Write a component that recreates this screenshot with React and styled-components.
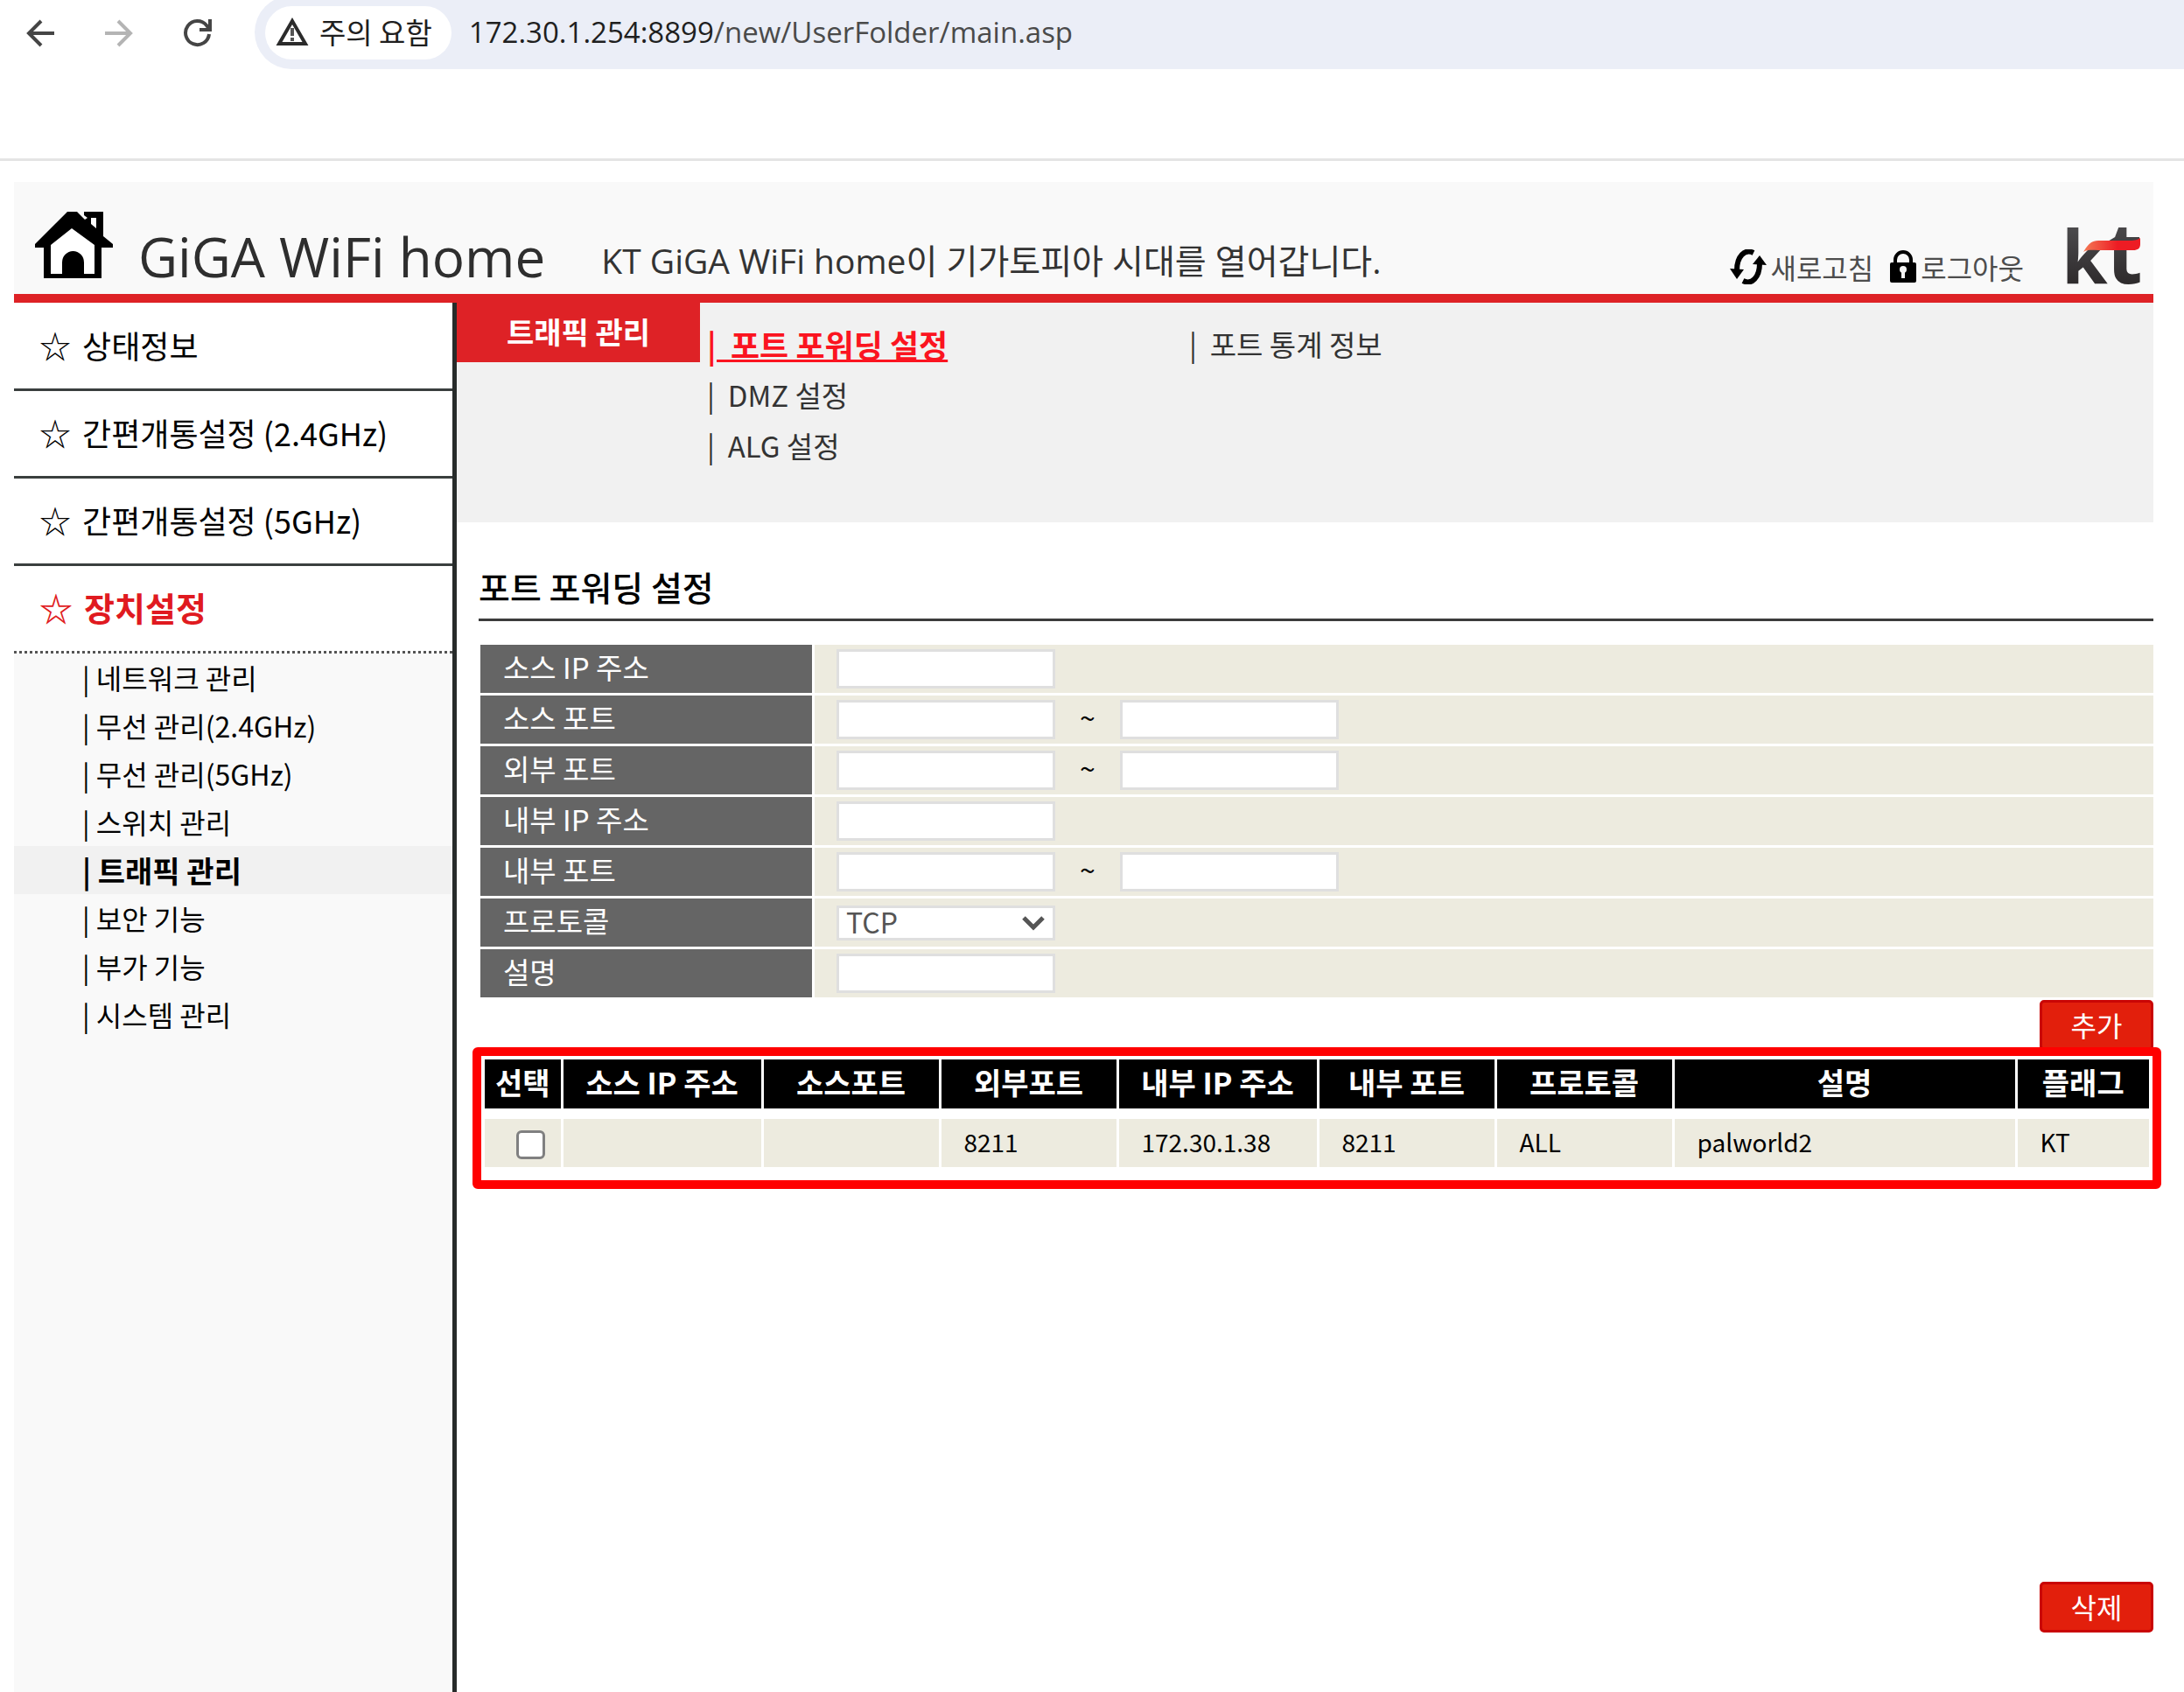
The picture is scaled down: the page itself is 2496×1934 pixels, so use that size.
import React, { useState } from 'react';
import styled, { createGlobalStyle } from 'styled-components';

const GlobalStyle = createGlobalStyle`
  * {
    box-sizing: border-box;
  }
  html, body {
    margin: 0;
    padding: 0;
    background: #ffffff;
  }
  body, button, input, select, table {
    font-family: "Noto Sans CJK KR", "Open Sans", sans-serif;
    font-size: 32px;
    color: #000000;
  }
`;

const Window = styled.div`
  display: flex;
  flex-direction: column;
  min-height: 100vh;
`;

/* browser bar */
const BrowserBar = styled.div`
  display: flex;
  align-items: flex-start;
  height: 184px;
  flex: none;
  padding-left: 24px;
  overflow: hidden;
  border-bottom: 3px solid #e4e4e4;
`;

const NavButton = styled.button`
  display: flex;
  align-items: center;
  justify-content: center;
  width: 44px;
  height: 75px;
  margin-right: 46px;
  padding: 0;
  border: none;
  background: none;
  color: ${(props) => (props.disabled ? '#b4b4b4' : '#454545')};
`;

const AddressBar = styled.div`
  display: flex;
  align-items: center;
  flex: 1;
  height: 84px;
  margin-top: -5px;
  margin-left: -3px;
  padding-left: 12px;
  border-radius: 42px 0 0 42px;
  background: #ebeef7;
`;

const SiteWarning = styled.button`
  display: flex;
  align-items: center;
  gap: 12px;
  height: 61px;
  padding: 0 22px 3px 12px;
  border: none;
  border-radius: 31px;
  background: #ffffff;
  font-size: 33px;
  line-height: 40px;
  color: #1f1f1f;
`;

const Url = styled.div`
  padding-left: 20px;
  font-family: "Open Sans", sans-serif;
  font-size: 33px;
  line-height: 44px;
  color: #4a4a4a;
`;

const Host = styled.span`
  color: #1f1f1f;
`;

/* router page */
const Page = styled.div`
  display: flex;
  flex-direction: column;
  flex: 1;
  padding: 24px 35px 0 16px;
`;

const Header = styled.header`
  display: flex;
  align-items: flex-end;
  height: 138px;
  padding: 0 14px 10px 24px;
  border-bottom: 10px solid #de2226;
  background: #f9f9f9;
`;

const Brand = styled.h1`
  display: flex;
  align-items: flex-end;
  gap: 28px;
  margin: 0;
  font-family: "Open Sans", sans-serif;
  font-size: 62px;
  font-weight: 400;
  line-height: 66px;
  color: #2e2e2e;

  & > svg {
    margin-bottom: 7px;
  }
`;

const Slogan = styled.p`
  margin: 0 auto 6px 64px;
  font-family: "Open Sans", "Noto Sans CJK KR", sans-serif;
  font-size: 39px;
  line-height: 44px;
  color: #333333;
`;

const Tools = styled.nav`
  display: flex;
  gap: 18px;
  margin: 0 48px 1px 0;
`;

const ToolLink = styled.a`
  display: flex;
  align-items: center;
  gap: 4px;
  line-height: 40px;
  color: #4d4d4d;
  text-decoration: none;
`;

const Logo = styled.svg`
  overflow: visible;
`;

const Columns = styled.div`
  display: flex;
  flex: 1;
`;

const Sidebar = styled.nav`
  width: 506px;
  flex: none;
  padding-top: 1px;
  border-right: 5px solid #272b2a;
  background: #f9f9f9;
`;

const MainItem = styled.a`
  display: flex;
  align-items: center;
  gap: 13px;
  height: 100px;
  padding: 0 0 4px 29px;
  border-bottom: ${(props) => (props.$active ? '3px dotted #555555' : '3px solid #3a3f3e')};
  background: #ffffff;
  font-size: ${(props) => (props.$active ? 38 : 36)}px;
  font-weight: ${(props) => (props.$active ? 700 : 400)};
  line-height: 48px;
  color: ${(props) => (props.$active ? '#e01a20' : '#000000')};
  text-decoration: none;
`;

const SubItem = styled.a`
  display: block;
  height: 55px;
  padding-left: 78px;
  background: ${(props) => (props.$active ? '#f1f1f1' : 'transparent')};
  font-size: ${(props) => (props.$active ? 34 : 32)}px;
  font-weight: ${(props) => (props.$active ? 700 : 400)};
  line-height: 55px;
  color: #000000;
  text-decoration: none;
`;

const Main = styled.main`
  display: flex;
  flex-direction: column;
  flex: 1;
`;

const TabPanel = styled.div`
  display: flex;
  align-items: flex-start;
  height: 251px;
  background: #f1f1f1;
`;

const TabTitle = styled.h2`
  width: 278px;
  margin: 0;
  padding-bottom: 2px;
  background: #de2226;
  font-size: 34px;
  font-weight: 700;
  line-height: 66px;
  color: #ffffff;
  text-align: center;
`;

const TabLinks = styled.div`
  display: grid;
  grid-template-columns: repeat(3, 1fr);
  flex: 1;
  padding: 18px 0 0 8px;
`;

const TabLink = styled.a`
  font-size: ${(props) => (props.$active ? 36 : 33)}px;
  font-weight: ${(props) => (props.$active ? 700 : 400)};
  line-height: 58px;
  color: ${(props) => (props.$active ? '#fb1420' : '#333333')};
  text-decoration: ${(props) => (props.$active ? 'underline' : 'none')};
  white-space: pre;
`;

const Content = styled.div`
  display: flex;
  flex-direction: column;
  flex: 1;
  padding: 50px 0 68px 25px;
`;

const SectionTitle = styled.h3`
  margin: 0 0 27px;
  padding-bottom: 13px;
  border-bottom: 3px solid #3c3c3c;
  font-size: 39px;
  font-weight: 500;
  line-height: 47px;
`;

const Form = styled.form`
  display: flex;
  flex-direction: column;
  gap: 3px;
  padding-left: 2px;
`;

const Row = styled.div`
  display: flex;
  gap: 3px;
  height: 55px;
`;

const RowLabel = styled.label`
  width: 379px;
  padding-left: 26px;
  background: #656565;
  font-size: 33px;
  line-height: 51px;
  color: #ffffff;
`;

const RowValue = styled.div`
  display: flex;
  align-items: center;
  flex: 1;
  padding: 0 0 0 25px;
  background: #edebdf;
`;

const TextBox = styled.input`
  width: 250px;
  height: 45px;
  padding: 0 10px;
  border: 3px solid #dfdfdf;
  background: #ffffff;
`;

const Tilde = styled.span`
  width: 74px;
  padding-bottom: 8px;
  line-height: 40px;
  text-align: center;
`;

const SelectWrap = styled.div`
  display: grid;
  width: 250px;
  align-items: center;

  & > * {
    grid-area: 1 / 1;
  }
  & > svg {
    justify-self: end;
    margin-right: 12px;
    pointer-events: none;
  }
`;

const SelectBox = styled.select`
  width: 100%;
  height: 40px;
  padding: 0 8px 4px;
  border: 3px solid #dfdfdf;
  border-radius: 0;
  background: #ffffff;
  line-height: 30px;
  color: #555555;
  appearance: none;
`;

const Buttons = styled.div`
  display: flex;
  justify-content: flex-end;
  margin-top: ${(props) => (props.$bottom ? 'auto' : '3px')};
`;

const RedButton = styled.button`
  width: 130px;
  height: 58px;
  padding: 0 0 3px;
  border: 3px solid #c90505;
  border-radius: 5px;
  background: #e21f0c;
  line-height: 48px;
  color: #ffffff;
`;

/* the frame lies over the bottom edge of the add button */
const RuleFrame = styled.div`
  position: relative;
  margin: -4px -9px 0 -7px;
  padding: 4px;
  border: 10px solid #ff0000;
  border-radius: 6px;
  background: #ffffff;
`;

const RuleTable = styled.table`
  width: 100%;
  table-layout: fixed;
  border-collapse: collapse;
`;

const Th = styled.th`
  width: ${(props) => (props.$width ? props.$width + 'px' : 'auto')};
  height: 56px;
  padding: 0 0 5px;
  background: #000000;
  font-size: 34px;
  font-weight: 700;
  line-height: 48px;
  color: #ffffff;

  & + & {
    border-left: 3px solid #ffffff;
  }
`;

const Td = styled.td`
  height: 55px;
  padding: 0 0 4px 26px;
  background: #edebdf;
  font-size: 28px;
  line-height: 48px;

  & + & {
    border-left: 3px solid #ffffff;
  }
`;

const CheckCell = styled(Td)`
  padding: 3px 0 0 36px;
`;

const Spacer = styled.td`
  height: ${(props) => props.$height}px;
  padding: 0;
`;

const Check = styled.input`
  display: block;
  width: 33px;
  height: 33px;
  margin: 0;
  border: 3px solid #808080;
  border-radius: 6px;
  background: #ffffff;
  appearance: none;

  &:checked {
    background: #0075ff;
  }
`;

const ArrowIcon = ({ flip }) => (
  <svg width="32" height="32" viewBox="0 0 32 32" fill="none" stroke="currentColor" strokeWidth="4">
    <path d={flip ? 'M0 16H29M15 2L29 16L15 30' : 'M32 16H3M17 2L3 16L17 30'} />
  </svg>
);

const ReloadIcon = () => (
  <svg width="34" height="34" viewBox="0 0 34 34" fill="none" stroke="currentColor" strokeWidth="4">
    <path d="M30 18A13.5 13.5 0 1 1 27 8L31 13" />
    <path d="M31 1V13H19" />
  </svg>
);

const WarningIcon = () => (
  <svg width="38" height="34" viewBox="0 0 38 34">
    <path d="M19 5L34 31H4Z" fill="none" stroke="#2b2b2b" strokeWidth="4" />
    <path d="M19 13V22M19 24V28" stroke="#555555" strokeWidth="4" />
  </svg>
);

const HouseIcon = () => (
  <svg width="90" height="77" viewBox="0 0 90 77">
    <path d="M37 0H48L57 9L60 7L56 4V0H78V28L89 37V41H76V76H10V41H0V37Z" fill="#000000" />
    <path d="M42 19L68 38V71H56V58A12.5 13 0 0 0 31 58V71H18V38Z" fill="#ffffff" />
    <path d="M64 7H70V19L64 14Z" fill="#ffffff" />
  </svg>
);

const RefreshIcon = () => (
  <svg width="42" height="40" viewBox="0 0 42 40">
    <path d="M27 4C17 -1 8 8 8 24" fill="none" stroke="#000000" strokeWidth="6" />
    <path d="M15 36C25 41 34 32 34 16" fill="none" stroke="#000000" strokeWidth="6" />
    <path d="M0 22L16 23L8 34Z" fill="#000000" />
    <path d="M42 18L26 17L34 7Z" fill="#000000" />
  </svg>
);

const LockIcon = () => (
  <svg width="32" height="38" viewBox="0 0 32 38">
    <path d="M7 16V11A9 9 0 0 1 25 11V16" fill="none" stroke="#000000" strokeWidth="4" />
    <rect x="1" y="14" width="30" height="23" rx="2" fill="#000000" />
    <circle cx="16" cy="22" r="4" fill="#f4f4f4" />
    <path d="M14 24H18V32H14Z" fill="#f4f4f4" />
  </svg>
);

const KtLogo = () => (
  <Logo width="86" height="68" viewBox="0 0 86 68" role="img" aria-label="kt">
    <defs>
      <linearGradient id="ktInk" x1="0" y1="0" x2="0" y2="1">
        <stop offset="0" stopColor="#58585a" />
        <stop offset="1" stopColor="#231f20" />
      </linearGradient>
      <linearGradient id="ktWing" x1="0" y1="0" x2="1" y2="0">
        <stop offset="0" stopColor="#f47a55" />
        <stop offset="0.6" stopColor="#ed1c24" />
      </linearGradient>
    </defs>
    <g fill="url(#ktInk)" fontFamily="Open Sans" fontWeight="700">
      <text x="-5" y="66" fontSize="85">k</text>
      <text x="46" y="66" fontSize="96">t</text>
    </g>
    <path d="M20 30C26 20 30 17 37 17H73C80 17 82 16 85 14V21C85 26 82 28 77 28H37C30 28 25 27 20 30Z" fill="url(#ktWing)" />
  </Logo>
);

const ChevronIcon = () => (
  <svg width="26" height="18" viewBox="0 0 26 18" fill="none" stroke="#555555" strokeWidth="5">
    <path d="M2 3L13 14L24 3" />
  </svg>
);

const mainItems = ['상태정보', '간편개통설정 (2.4GHz)', '간편개통설정 (5GHz)', '장치설정'];

const subItems = [
  '네트워크 관리',
  '무선 관리(2.4GHz)',
  '무선 관리(5GHz)',
  '스위치 관리',
  '트래픽 관리',
  '보안 기능',
  '부가 기능',
  '시스템 관리',
];

const fields = [
  { id: 'srcIp', label: '소스 IP 주소' },
  { id: 'srcPort', label: '소스 포트', range: true },
  { id: 'extPort', label: '외부 포트', range: true },
  { id: 'intIp', label: '내부 IP 주소' },
  { id: 'intPort', label: '내부 포트', range: true },
  { id: 'protocol', label: '프로토콜', options: ['TCP', 'UDP', 'ALL'] },
  { id: 'desc', label: '설명' },
];

const columns = [
  { name: '선택', width: 88 },
  { name: '소스 IP 주소', width: 229 },
  { name: '소스포트', width: 203 },
  { name: '외부포트', width: 203 },
  { name: '내부 IP 주소', width: 229 },
  { name: '내부 포트', width: 203 },
  { name: '프로토콜', width: 203 },
  { name: '설명' },
  { name: '플래그', width: 152 },
];

const rules = [['', '', '8211', '172.30.1.38', '8211', 'ALL', 'palworld2', 'KT']];

const Field = ({ field }) => (
  <Row>
    <RowLabel htmlFor={field.id}>{field.label}</RowLabel>
    <RowValue>
      {field.options ? (
        <SelectWrap>
          <SelectBox id={field.id}>
            {field.options.map((option) => (
              <option key={option}>{option}</option>
            ))}
          </SelectBox>
          <ChevronIcon />
        </SelectWrap>
      ) : (
        <TextBox id={field.id} type="text" />
      )}
      {field.range && (
        <>
          <Tilde>~</Tilde>
          <TextBox id={field.id + 'End'} type="text" aria-label={field.label} />
        </>
      )}
    </RowValue>
  </Row>
);

const App = () => {
  const [selected, setSelected] = useState(false);

  return (
    <Window>
      <GlobalStyle />
      <BrowserBar>
        <NavButton aria-label="뒤로"><ArrowIcon /></NavButton>
        <NavButton aria-label="앞으로" disabled><ArrowIcon flip /></NavButton>
        <NavButton aria-label="새로고침"><ReloadIcon /></NavButton>
        <AddressBar>
          <SiteWarning><WarningIcon />주의 요함</SiteWarning>
          <Url><Host>172.30.1.254:8899</Host>/new/UserFolder/main.asp</Url>
        </AddressBar>
      </BrowserBar>
      <Page>
        <Header>
          <Brand><HouseIcon />GiGA WiFi home</Brand>
          <Slogan>KT GiGA WiFi home이 기가토피아 시대를 열어갑니다.</Slogan>
          <Tools>
            <ToolLink href="#refresh"><RefreshIcon />새로고침</ToolLink>
            <ToolLink href="#logout"><LockIcon />로그아웃</ToolLink>
          </Tools>
          <KtLogo />
        </Header>
        <Columns>
          <Sidebar>
            {mainItems.map((item) => (
              <MainItem key={item} href="#menu" $active={item === '장치설정'}>
                <span>☆</span>{item}
              </MainItem>
            ))}
            {subItems.map((item) => (
              <SubItem key={item} href="#submenu" $active={item === '트래픽 관리'}>
                | {item}
              </SubItem>
            ))}
          </Sidebar>
          <Main>
            <TabPanel>
              <TabTitle>트래픽 관리</TabTitle>
              <TabLinks>
                <div><TabLink href="#port" $active>{'|  포트 포워딩 설정'}</TabLink></div>
                <div><TabLink href="#stats">{'|  포트 통계 정보'}</TabLink></div>
                <div />
                <div><TabLink href="#dmz">{'|  DMZ 설정'}</TabLink></div>
                <div />
                <div />
                <div><TabLink href="#alg">{'|  ALG 설정'}</TabLink></div>
              </TabLinks>
            </TabPanel>
            <Content>
              <SectionTitle>포트 포워딩 설정</SectionTitle>
              <Form>
                {fields.map((field) => (
                  <Field key={field.id} field={field} />
                ))}
              </Form>
              <Buttons>
                <RedButton type="button">추가</RedButton>
              </Buttons>
              <RuleFrame>
                <RuleTable>
                  <thead>
                    <tr>
                      {columns.map((column) => (
                        <Th key={column.name} $width={column.width}>{column.name}</Th>
                      ))}
                    </tr>
                  </thead>
                  <tbody>
                    <tr><Spacer colSpan={9} $height={12} /></tr>
                    {rules.map((rule, i) => (
                      <tr key={i}>
                        <CheckCell>
                          <Check
                            type="checkbox"
                            aria-label="선택"
                            checked={selected}
                            onChange={(e) => setSelected(e.target.checked)}
                          />
                        </CheckCell>
                        {rule.map((value, j) => (
                          <Td key={j}>{value}</Td>
                        ))}
                      </tr>
                    ))}
                    <tr><Spacer colSpan={9} $height={11} /></tr>
                  </tbody>
                </RuleTable>
              </RuleFrame>
              <Buttons $bottom>
                <RedButton type="button">삭제</RedButton>
              </Buttons>
            </Content>
          </Main>
        </Columns>
      </Page>
    </Window>
  );
};

export default App;
